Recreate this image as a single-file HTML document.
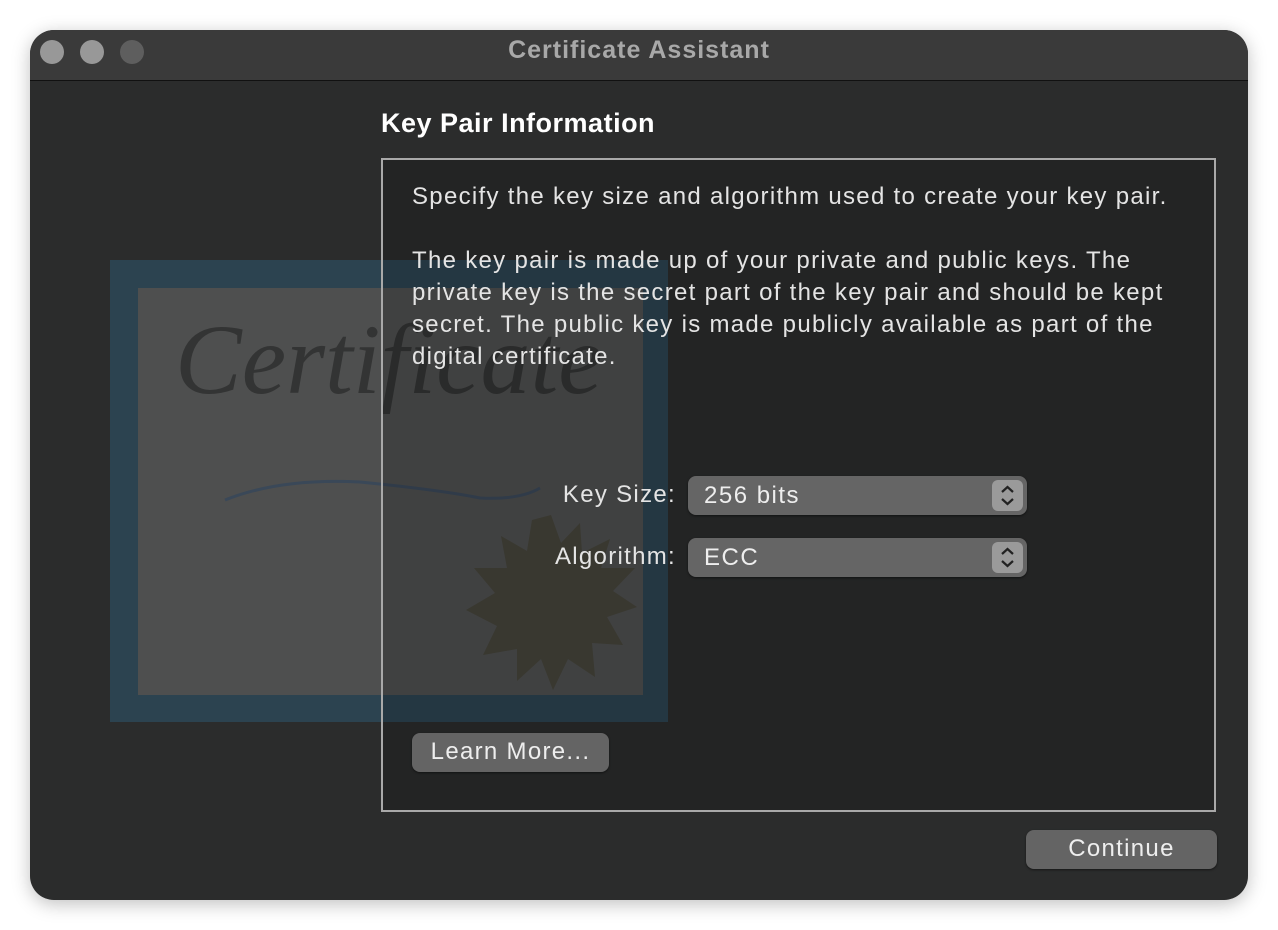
<!DOCTYPE html>
<html><head><style>
*{margin:0;padding:0;box-sizing:border-box}
body{width:1278px;height:930px;background:#fff;font-family:"Liberation Sans",sans-serif;position:relative;overflow:hidden}
.win{position:absolute;left:30px;top:30px;width:1218px;height:870px;border-radius:24px;background:#2b2c2c;overflow:hidden;box-shadow:0 4px 18px rgba(0,0,0,.25)}
.tb{position:absolute;left:0;top:0;width:100%;height:51px;background:#3a3a3a;border-bottom:1px solid #111}
.dot{position:absolute;top:10px;width:24px;height:24px;border-radius:50%}
.title{position:absolute;top:6px;width:100%;text-align:center;color:#a8a8a8;font-weight:bold;font-size:25px;letter-spacing:1px}
.abs{position:absolute}
.txt{color:#e4e4e4;font-size:24px;line-height:32px;letter-spacing:1.3px;white-space:nowrap}
.pop{position:absolute;left:658px;width:339px;height:39px;border-radius:8px;background:#656565;box-shadow:0 1px 2px rgba(0,0,0,.5);color:#eee;font-size:24px;letter-spacing:1.5px;line-height:39px;padding-left:16px}
.step{position:absolute;right:4px;top:4px;width:31px;height:31px;border-radius:6px;background:#9a9a9a}
.btn{position:absolute;height:39px;border-radius:8px;background:#646464;color:#eee;font-size:24px;letter-spacing:1.3px;line-height:38px;text-align:center;box-shadow:0 1px 2px rgba(0,0,0,.5)}
</style></head><body>
<div class="win">
<div class="tb">
<div class="dot" style="left:10px;background:#989898"></div>
<div class="dot" style="left:50px;background:#989898"></div>
<div class="dot" style="left:90px;background:#5e5e5e"></div>
<div class="title">Certificate Assistant</div>
</div>
<!-- certificate -->
<div class="abs" style="left:80px;top:230px;width:558px;height:462px;background:#2c4350"></div>
<div class="abs" style="left:108px;top:258px;width:505px;height:407px;background:#4e4f4f"></div>
<div class="abs" style="left:145px;top:272px;font-family:'Liberation Serif',serif;font-style:italic;font-size:100px;color:#333434">Certificate</div>
<svg class="abs" style="left:190px;top:440px" width="330" height="40"><path d="M5 30 Q60 8 140 12 Q220 20 260 28 Q300 30 320 18" stroke="#3a4858" stroke-width="3" fill="none"/></svg>
<svg class="abs" style="left:435px;top:485px" width="172" height="175"><polygon fill="#45443a" points="86,0 96,28 115,8 117,38 145,24 136,53 170,53 148,76 172,92 142,102 158,130 127,128 130,162 103,144 88,175 76,144 52,166 52,134 18,140 32,111 1,95 30,78 9,53 42,53 36,21 62,36 67,5"/></svg>
<!-- panel -->
<div class="abs" style="left:351px;top:128px;width:835px;height:654px;border:2px solid #a9a9a9;background:rgba(0,0,0,.17)"></div>
<div class="abs" style="left:351px;top:78px;color:#fff;font-weight:bold;font-size:27px;letter-spacing:.5px">Key Pair Information</div>
<div class="abs txt" style="left:382px;top:151px">Specify the key size and algorithm used to create your key pair.</div>
<div class="abs txt" style="left:382px;top:215px">The key pair is made up of your private and public keys. The<br>private key is the secret part of the key pair and should be kept<br>secret. The public key is made publicly available as part of the<br>digital certificate.</div>
<div class="abs txt" style="left:440px;top:449px;width:206px;text-align:right">Key Size:</div>
<div class="abs txt" style="left:440px;top:511px;width:206px;text-align:right">Algorithm:</div>
<div class="pop" style="top:446px">256 bits<div class="step"><svg width="31" height="31"><path d="M10 12 L15.5 7 L21 12 M10 19 L15.5 24 L21 19" stroke="#222" stroke-width="2.2" fill="none"/></svg></div></div>
<div class="pop" style="top:508px">ECC<div class="step"><svg width="31" height="31"><path d="M10 12 L15.5 7 L21 12 M10 19 L15.5 24 L21 19" stroke="#222" stroke-width="2.2" fill="none"/></svg></div></div>
<div class="btn" style="left:382px;top:703px;width:197px">Learn More...</div>
<div class="btn" style="left:996px;top:800px;width:191px">Continue</div>
</div>
</body></html>
